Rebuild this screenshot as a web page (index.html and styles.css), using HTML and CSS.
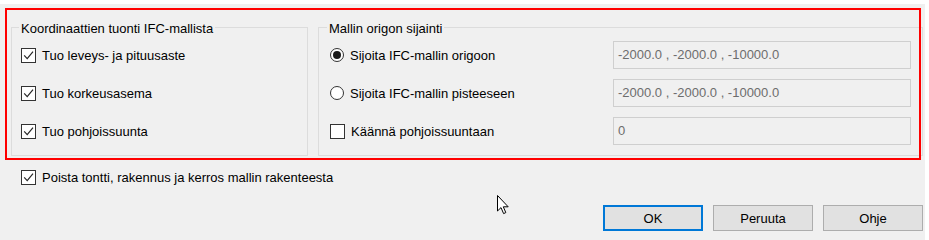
FILE: index.html
```html
<!DOCTYPE html>
<html lang="fi">
<head>
<meta charset="utf-8">
<title>IFC-tuonti</title>
<link rel="stylesheet" href="styles.css">
</head>
<body>
<div class="window">
  <div class="groups">
    <div class="group group-left">
      <div class="legend">Koordinaattien tuonti IFC-mallista</div>
      <div class="row"><span class="check on"><svg viewBox="0 0 13 13"><path d="M2.2 6.4 L5.2 9.6 L11 2.6"/></svg></span><span>Tuo leveys- ja pituusaste</span></div>
      <div class="row"><span class="check on"><svg viewBox="0 0 13 13"><path d="M2.2 6.4 L5.2 9.6 L11 2.6"/></svg></span><span>Tuo korkeusasema</span></div>
      <div class="row"><span class="check on"><svg viewBox="0 0 13 13"><path d="M2.2 6.4 L5.2 9.6 L11 2.6"/></svg></span><span>Tuo pohjoissuunta</span></div>
    </div>
    <div class="group group-right">
      <div class="legend">Mallin origon sijainti</div>
      <div class="grid">
        <div class="row"><span class="radio on"></span><span>Sijoita IFC-mallin origoon</span></div>
        <div class="field">-2000.0 , -2000.0 , -10000.0</div>
        <div class="row"><span class="radio"></span><span>Sijoita IFC-mallin pisteeseen</span></div>
        <div class="field">-2000.0 , -2000.0 , -10000.0</div>
        <div class="row"><span class="check"></span><span>Käännä pohjoissuuntaan</span></div>
        <div class="field">0</div>
      </div>
    </div>
  </div>
  <div class="row bottom-row"><span class="check on"><svg viewBox="0 0 13 13"><path d="M2.2 6.4 L5.2 9.6 L11 2.6"/></svg></span><span>Poista tontti, rakennus ja kerros mallin rakenteesta</span></div>
  <div class="buttons">
    <button class="btn default">OK</button>
    <button class="btn">Peruuta</button>
    <button class="btn">Ohje</button>
  </div>
  <div class="highlight"></div>
  <svg class="cursor" width="13" height="20" viewBox="0 0 13 20"><path d="M0.5 0.5 L0.5 16 L4 12.6 L6.6 18.6 L8.8 17.6 L6.3 11.8 L11.2 11.8 Z" fill="#fff" stroke="#000" stroke-width="1" stroke-linejoin="miter"/></svg>
</div>
</body>
</html>
```

FILE: styles.css
```css
html, body {
  margin: 0;
  padding: 0;
  background: #ffffff;
}
body {
  font-family: "Liberation Sans", Arial, sans-serif;
  font-size: 13px;
  color: #000;
}
.window {
  position: relative;
  margin-top: 4px;
  width: 925px;
  height: 236px;
  box-sizing: border-box;
  background: #f0f0f0;
  padding: 23px 0 0 11px;
}
.groups {
  display: flex;
  gap: 10px;
}
.group {
  box-sizing: border-box;
  border: 1px solid #dcdcdc;
  height: 129px;
}
.group-left {
  width: 297px;
  padding-left: 9px;
}
.group-right {
  width: 605px;
  padding-left: 11px;
}
.legend {
  display: table;
  margin: -7px 0 0 -2px;
  padding: 0 2px;
  background: #f0f0f0;
  line-height: 15px;
}
.group-right .legend {
  margin-left: -3px;
}
.row {
  display: flex;
  align-items: center;
  gap: 6px;
  height: 38px;
  white-space: nowrap;
}
.grid {
  display: grid;
  grid-template-columns: 283px 298px;
  align-items: center;
}
.check {
  width: 15px;
  height: 15px;
  box-sizing: border-box;
  border: 1px solid #333;
  background: #fff;
  display: inline-flex;
  flex: none;
}
.check svg {
  width: 13px;
  height: 13px;
}
.check path {
  fill: none;
  stroke: #262626;
  stroke-width: 1.2;
}
.radio {
  width: 14px;
  height: 14px;
  box-sizing: border-box;
  border: 1px solid #333;
  border-radius: 50%;
  background: #fff;
  flex: none;
  display: inline-flex;
  align-items: center;
  justify-content: center;
}
.radio.on::after {
  content: "";
  width: 8px;
  height: 8px;
  border-radius: 50%;
  background: #1a1a1a;
}
.field {
  box-sizing: border-box;
  height: 28px;
  border: 1px solid #cfcfcf;
  background: #f0f0f0;
  color: #6d6d6d;
  padding-left: 4px;
  line-height: 26px;
}
.bottom-row {
  height: 20px;
  margin: 11px 0 0 10px;
}
.buttons {
  display: flex;
  justify-content: flex-end;
  gap: 10px;
  margin-top: 18px;
  padding-right: 2px;
  margin-left: -11px;
}
.btn {
  width: 100px;
  height: 26px;
  box-sizing: border-box;
  border: 1px solid #adadad;
  background: #e1e1e1;
  font-family: "Liberation Sans", Arial, sans-serif;
  font-size: 13px;
  color: #000;
  padding: 0;
}
.btn.default {
  border: 2px solid #0078d7;
}
.highlight {
  position: absolute;
  left: 5px;
  top: 4px;
  width: 916px;
  height: 152px;
  box-sizing: border-box;
  border: 2px solid #ff0000;
  pointer-events: none;
}
.cursor {
  position: absolute;
  left: 497px;
  top: 191px;
}
```
